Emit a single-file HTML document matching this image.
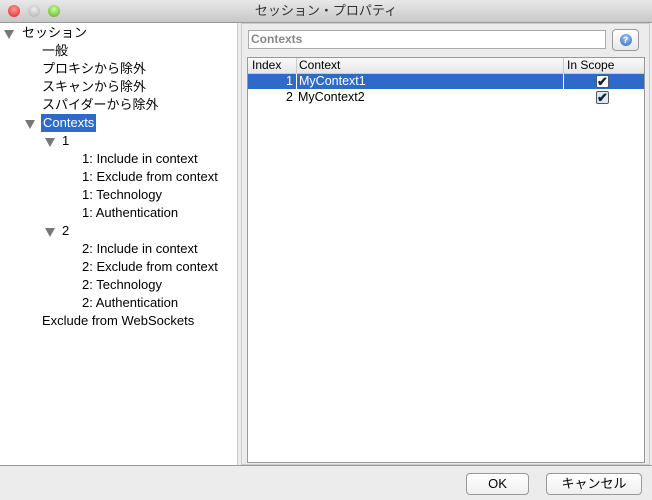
<html><head><style>
body{margin:0;width:652px;height:500px;background:#ececec;font-family:"Liberation Sans","Noto Sans CJK JP",sans-serif;font-size:13px;position:relative;overflow:hidden;color:#000}
.a{position:absolute}
#title{left:0;top:0;width:652px;height:22px;background:linear-gradient(#e8e8e8,#c8c8c8);border-bottom:1px solid #999;text-align:center;line-height:22px;font-size:13px;color:#333}
.dot{position:absolute;top:5px;width:12px;height:12px;border-radius:50%}
#tree{left:0;top:23px;width:237px;height:442px;background:#fff;border-right:1px solid #ccc}
.r{position:absolute;height:18px;line-height:18px;white-space:nowrap}
.tri{position:absolute;width:0;height:0;border-left:5px solid transparent;border-right:5px solid transparent;border-top:9px solid #777}
#right{left:241px;top:23px;width:407px;height:440px;border:1px solid #ccc;background:#ececec}
.btn{position:absolute;top:473px;height:20px;border:1px solid #999;border-radius:4px;background:linear-gradient(#fff,#f0f0f0);text-align:center;line-height:20px;font-size:13px}
</style></head><body>
<div id="title" class="a">セッション・プロパティ
<div class="dot" style="left:8px;background:radial-gradient(circle at 50% 35%,#f99,#d22)"></div>
<div class="dot" style="left:28px;background:radial-gradient(circle at 50% 35%,#eee,#aaa)"></div>
<div class="dot" style="left:48px;background:radial-gradient(circle at 50% 35%,#cf9,#5a2)"></div>
</div>
<div id="tree" class="a">
<div class="tri" style="left:4px;top:7px"></div><div class="r" style="left:22px;top:1px">セッション</div>
<div class="r" style="left:42px;top:19px">一般</div>
<div class="r" style="left:42px;top:37px">プロキシから除外</div>
<div class="r" style="left:42px;top:55px">スキャンから除外</div>
<div class="r" style="left:42px;top:73px">スパイダーから除外</div>
<div class="tri" style="left:25px;top:97px"></div><div class="r" style="left:41px;top:91px;background:#2d6bc8;color:#fff;padding:0 2px">Contexts</div>
<div class="tri" style="left:45px;top:115px"></div><div class="r" style="left:62px;top:109px">1</div>
<div class="r" style="left:82px;top:127px">1: Include in context</div>
<div class="r" style="left:82px;top:145px">1: Exclude from context</div>
<div class="r" style="left:82px;top:163px">1: Technology</div>
<div class="r" style="left:82px;top:181px">1: Authentication</div>
<div class="tri" style="left:45px;top:205px"></div><div class="r" style="left:62px;top:199px">2</div>
<div class="r" style="left:82px;top:217px">2: Include in context</div>
<div class="r" style="left:82px;top:235px">2: Exclude from context</div>
<div class="r" style="left:82px;top:253px">2: Technology</div>
<div class="r" style="left:82px;top:271px">2: Authentication</div>
<div class="r" style="left:42px;top:289px">Exclude from WebSockets</div>
</div>
<div id="right" class="a"></div>
<div class="a" style="left:248px;top:30px;width:354px;height:17px;background:#fff;border:1px solid #aaa;color:#888;font-weight:bold;font-size:12px;line-height:17px;padding-left:2px;box-sizing:content-box">Contexts</div>
<div class="a" style="left:612px;top:29px;width:25px;height:20px;border:1px solid #999;border-radius:4px;background:linear-gradient(#fff,#e8e8e8)"><div style="margin:4px auto;width:12px;height:12px;border-radius:50%;background:radial-gradient(circle at 50% 35%,#9cf,#36a);color:#fff;font-size:9px;line-height:12px;text-align:center;font-weight:bold">?</div></div>
<div class="a" style="left:247px;top:57px;width:396px;height:404px;background:#fff;border:1px solid #999;font-size:12.5px">
<div class="a" style="left:0;top:0;width:396px;height:15px;background:linear-gradient(#fafafa,#e6e6e6);border-bottom:1px solid #ccc;line-height:15px;font-size:12px">
<span class="a" style="left:4px">Index</span><span class="a" style="left:48px;border-left:1px solid #ccc;height:15px;padding-left:2px">Context</span><span class="a" style="left:315px;border-left:1px solid #ccc;height:15px;padding-left:3px">In Scope</span></div>
<div class="a" style="left:0;top:16px;width:396px;height:15px;background:#2d6bc8;color:#fff;line-height:15px">
<span class="a" style="left:38px">1</span><span class="a" style="left:48px;border-left:1px solid #fff;padding-left:2px;height:15px">MyContext1</span><span class="a" style="left:315px;border-left:1px solid #fff;height:15px;width:81px"></span></div>
<div class="a" style="left:0;top:31px;width:396px;height:16px;line-height:16px">
<span class="a" style="left:38px">2</span><span class="a" style="left:50px">MyContext2</span></div>
<div class="a" style="left:348px;top:17px;width:11px;height:11px;background:#fff;border:1px solid #556;border-radius:2px;font-size:13px;line-height:11px;text-align:center;color:#123;font-weight:bold">✔</div>
<div class="a" style="left:348px;top:33px;width:11px;height:11px;background:#dde8f5;border:1px solid #556;border-radius:2px;font-size:13px;line-height:11px;text-align:center;color:#123;font-weight:bold">✔</div>
</div>
<div class="a" style="left:0;top:465px;width:652px;height:1px;background:#999"></div>
<div class="btn" style="left:466px;width:61px">OK</div>
<div class="btn" style="left:546px;width:94px">キャンセル</div>
</body></html>
